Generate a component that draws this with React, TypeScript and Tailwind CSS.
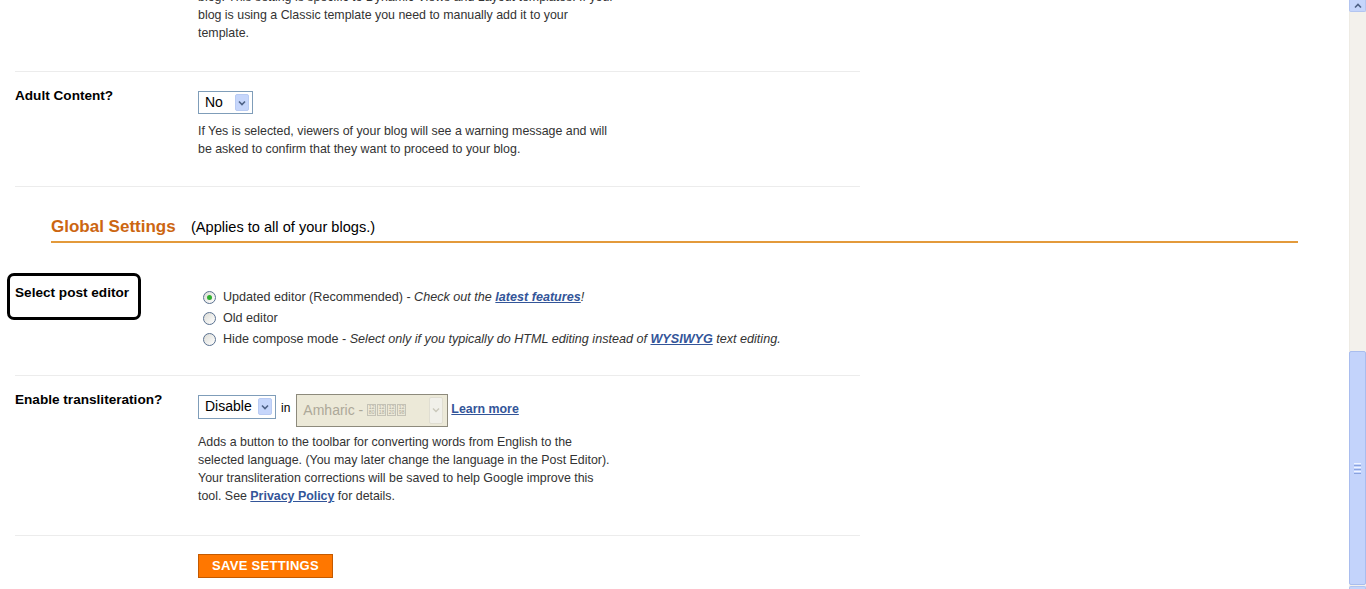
import React from "react";

// XP-style fake dropdown arrow
function Arrow({ disabled = false }: { disabled?: boolean }) {
  return (
    <div
      className={`flex items-center justify-center rounded-[2px] border ${
        disabled ? "border-[#e6e3d6] bg-[#f4f3ee]" : "border-[#b9cbf3] bg-[#c6d6fb]"
      } w-[14px] h-[17px]`}
    >
      <svg width="8" height="6" viewBox="0 0 8 6">
        <path
          d="M1 1.5 L4 4.5 L7 1.5"
          fill="none"
          stroke={disabled ? "#c9c7ba" : "#4d6185"}
          strokeWidth="1.6"
        />
      </svg>
    </div>
  );
}

function Radio({ checked = false }: { checked?: boolean }) {
  return (
    <span className="ml-[5px] mr-[7px] flex h-[13px] w-[13px] shrink-0 items-center justify-center rounded-full border border-[#5a7190] bg-gradient-to-br from-[#dcdcd6] to-white">
      {checked && <span className="h-[5px] w-[5px] rounded-full bg-[#2fae2f]" />}
    </span>
  );
}

function Tofu({ a, b }: { a: string; b: string }) {
  return (
    <span className="mr-[1px] inline-flex h-[12px] w-[9px] flex-col items-center justify-center border border-[#c4c2b6] text-[5px] leading-[5px] text-[#aca899]">
      <span>{a}</span>
      <span>{b}</span>
    </span>
  );
}

export default function App() {
  return (
    <div className="flex h-[589px] w-[1366px] overflow-hidden bg-white font-['Liberation_Sans',Arial,sans-serif] text-[12.4px] text-[#333]">
      <div className="flex flex-1 flex-col">
        {/* partial row at top */}
        <div className="-mt-[12px] ml-[15px] flex w-[845px] border-b border-[#ececec] pb-[29px]">
          <div className="w-[183px] shrink-0" />
          <p className="leading-[18px]">
            blog. This setting is specific to Dynamic Views and Layout templates. If your
            <br />
            blog is using a Classic template you need to manually add it to your
            <br />
            template.
          </p>
        </div>

        {/* Adult content */}
        <div className="ml-[15px] flex w-[845px] border-b border-[#ececec] pb-[28px]">
          <div className="mt-[16px] w-[183px] shrink-0 text-[13.6px] font-bold leading-[16px] text-black">
            Adult Content?
          </div>
          <div className="pt-[19px]">
            <div className="flex h-[23px] w-[55px] items-center justify-between border border-[#7f9db9] bg-white pl-[6px] pr-[3px] text-[14px] text-black">
              <span>No</span>
              <Arrow />
            </div>
            <p className="mt-[8px] leading-[18px]">
              If Yes is selected, viewers of your blog will see a warning message and will
              <br />
              be asked to confirm that they want to proceed to your blog.
            </p>
          </div>
        </div>

        {/* Global settings heading */}
        <div className="ml-[51px] mt-[29px] flex w-[1247px] items-baseline border-b-2 border-[#e39a3b] pb-[2px]">
          <span className="w-[140px] text-[17px] font-bold leading-[22px] text-[#cc6611]">
            Global Settings
          </span>
          <span className="text-[14.6px] text-black">(Applies to all of your blogs.)</span>
        </div>

        {/* Select post editor */}
        <div className="ml-[15px] flex w-[845px] border-b border-[#ececec] pb-[25px]">
          <div className="mt-[30px] w-[183px] shrink-0">
            <div className="-ml-[8px] h-[47px] w-[134px] rounded-[7px] border-[3px] border-black pl-[5px] pt-[9px] text-[13.6px] font-bold leading-[16px] text-black">
              Select post editor
            </div>
          </div>
          <div className="mt-[44px] flex flex-col text-[12.6px]">
            <div className="flex h-[21px] items-center">
              <Radio checked />
              <span>
                Updated editor (Recommended) -{" "}
                <i>
                  Check out the{" "}
                  <a className="font-bold text-[#335599] underline">latest features</a>!
                </i>
              </span>
            </div>
            <div className="flex h-[21px] items-center">
              <Radio />
              <span>Old editor</span>
            </div>
            <div className="flex h-[21px] items-center">
              <Radio />
              <span>
                Hide compose mode -{" "}
                <i>
                  Select only if you typically do HTML editing instead of{" "}
                  <a className="font-bold text-[#335599] underline">WYSIWYG</a> text editing.
                </i>
              </span>
            </div>
          </div>
        </div>

        {/* Transliteration */}
        <div className="ml-[15px] flex w-[845px] border-b border-[#ececec] pb-[30px]">
          <div className="mt-[16px] w-[183px] shrink-0 text-[13.6px] font-bold leading-[16px] text-black">
            Enable transliteration?
          </div>
          <div className="pt-[18px]">
            <div className="flex items-start">
              <div className="mt-[1px] flex h-[24px] w-[78px] items-center justify-between border border-[#7f9db9] bg-white pl-[6px] pr-[3px] text-[14px] text-black">
                <span>Disable</span>
                <Arrow />
              </div>
              <span className="ml-[5px] mr-[6px] mt-[5px] text-[12px] text-black">in</span>
              <div className="flex h-[33px] w-[152px] items-center justify-between border border-[#8d8a7c] bg-[#ece9d8] pl-[6px] pr-[4px] text-[14px] text-[#aca899]">
                <span className="flex items-center">
                  Amharic -&nbsp;
                  <Tofu a="12" b="80" />
                  <Tofu a="12" b="18" />
                  <Tofu a="12" b="20" />
                  <Tofu a="12" b="98" />
                </span>
                <div className="flex h-[27px] w-[14px] items-center justify-center rounded-[2px] border border-[#e0ded2] bg-[#f1f0ea]">
                  <svg width="8" height="6" viewBox="0 0 8 6">
                    <path d="M1 1.5 L4 4.5 L7 1.5" fill="none" stroke="#c9c7ba" strokeWidth="1.4" />
                  </svg>
                </div>
              </div>
              <a className="ml-[3px] mt-[6px] text-[12.4px] font-bold text-[#335599] underline">
                Learn more
              </a>
            </div>
            <p className="mt-[6px] leading-[18px]">
              Adds a button to the toolbar for converting words from English to the
              <br />
              selected language. (You may later change the language in the Post Editor).
              <br />
              Your transliteration corrections will be saved to help Google improve this
              <br />
              tool. See <a className="font-bold text-[#335599] underline">Privacy Policy</a> for
              details.
            </p>
          </div>
        </div>

        {/* Save */}
        <div className="ml-[198px] mt-[18px]">
          <button className="h-[24px] w-[135px] border border-[#c45a00] bg-[#ff7700] text-[13px] font-bold tracking-[0.3px] text-white">
            SAVE SETTINGS
          </button>
        </div>
      </div>

      {/* XP scrollbar */}
      <div className="flex w-[17px] shrink-0 flex-col bg-[#f3f1ec]">
        <div className="flex h-[12px] items-center justify-center rounded-b-[2px] border border-t-0 border-[#b3c5f0] bg-[#c5d5fb]">
          <svg width="8" height="6" viewBox="0 0 8 6">
            <path d="M1 4.5 L4 1.5 L7 4.5" fill="none" stroke="#4d6185" strokeWidth="1.6" />
          </svg>
        </div>
        <div className="h-[339px] border-l border-[#eeebe4]" />
        <div className="flex h-[234px] items-center justify-center rounded-[2px] border border-[#a9bdee] bg-[#c3d3fb]">
          <div className="flex flex-col gap-[1px]">
            <span className="h-[1px] w-[7px] bg-[#eef3ff]" />
            <span className="h-[1px] w-[7px] bg-[#8aa3df]" />
            <span className="h-[1px] w-[7px] bg-[#eef3ff]" />
            <span className="h-[1px] w-[7px] bg-[#8aa3df]" />
            <span className="h-[1px] w-[7px] bg-[#eef3ff]" />
            <span className="h-[1px] w-[7px] bg-[#8aa3df]" />
          </div>
        </div>
        <div className="mt-[1px] h-[3px] rounded-t-[2px] border border-b-0 border-[#b3c5f0] bg-[#c5d5fb]" />
      </div>
    </div>
  );
}
